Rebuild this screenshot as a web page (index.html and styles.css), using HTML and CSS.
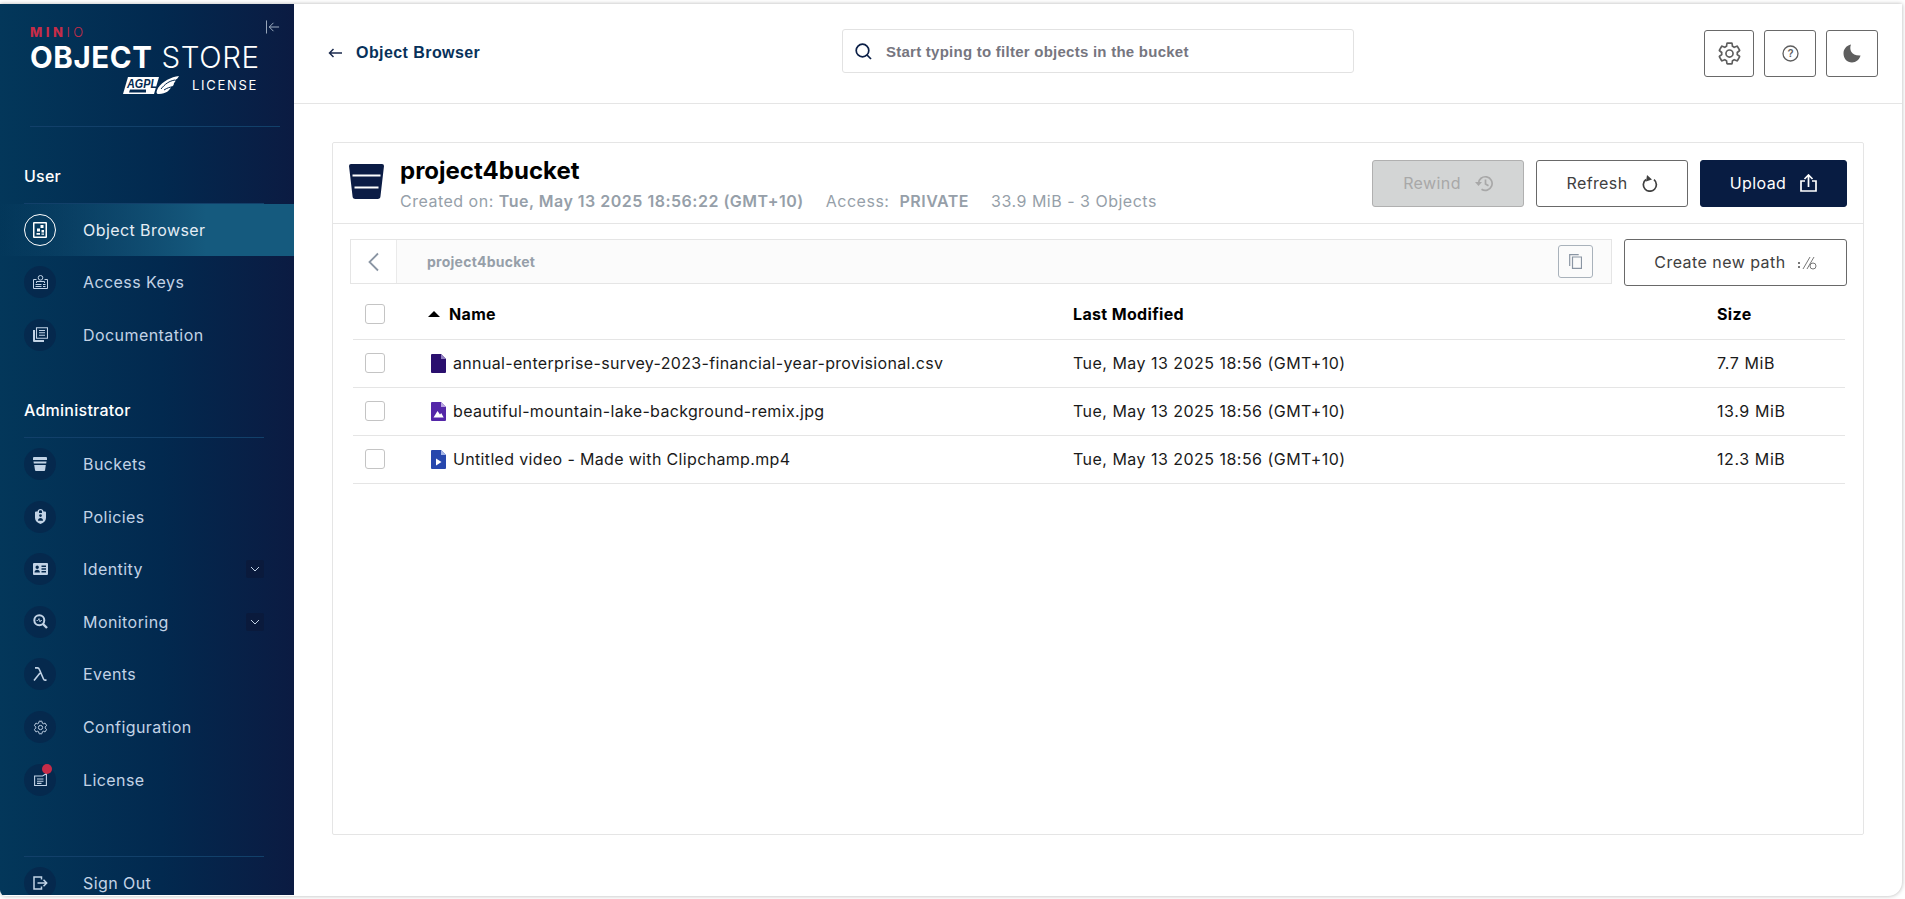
FILE: index.html
```html
<!DOCTYPE html>
<html lang="en">
<head>
    <meta charset="UTF-8">
    <meta name="viewport" content="width=device-width, initial-scale=1.0">
    <title>MinIO Object Store - Object Browser</title>
    <link rel="stylesheet" href="styles.css">
</head>
<body>
    <svg class="defs" width="0" height="0">
        <symbol id="gear" viewBox="0 0 24 24">
            <path fill="none" stroke="currentColor" stroke-width="1.6" stroke-linejoin="round" d="M19.43 12.98c.04-.32.07-.64.07-.98 0-.34-.03-.66-.07-.98l2.11-1.65c.19-.15.24-.42.12-.64l-2-3.46c-.12-.22-.37-.3-.61-.22l-2.49 1c-.52-.4-1.08-.73-1.69-.98l-.38-2.65C14.46 2.18 14.25 2 14 2h-4c-.25 0-.46.18-.49.42l-.38 2.65c-.61.25-1.17.59-1.69.98l-2.49-1c-.24-.08-.49 0-.61.22l-2 3.46c-.13.22-.07.49.12.64l2.11 1.65c-.04.32-.07.65-.07.98 0 .33.03.66.07.98l-2.11 1.65c-.19.15-.24.42-.12.64l2 3.46c.12.22.37.3.61.22l2.49-1c.52.4 1.08.73 1.69.98l.38 2.65c.03.24.24.42.49.42h4c.25 0 .46-.18.49-.42l.38-2.65c.61-.25 1.17-.59 1.69-.98l2.49 1c.24.08.49 0 .61-.22l2-3.46c.12-.22.07-.49-.12-.64z"/>
            <circle cx="12" cy="12" r="3.4" fill="none" stroke="currentColor" stroke-width="1.6"/>
        </symbol>
        <symbol id="chevron" viewBox="0 0 10 6">
            <path fill="none" stroke="currentColor" stroke-width="1" d="M1 1l4 4 4-4"/>
        </symbol>
    </svg>

    <div class="app">
        <aside class="sidebar">
            <div class="brand">
                <div class="logo">
                    <div class="logo-minio"><b>MIN</b>IO</div>
                    <div class="logo-title"><b>OBJECT</b> STORE</div>
                    <div class="logo-license">
                        <svg class="agpl" width="58" height="19" viewBox="0 0 58 19">
                            <path fill="#fff" d="M6 1h31l-5 17H1z"/>
                            <text x="5" y="12" class="agpl-text" textLength="30" lengthAdjust="spacingAndGlyphs">AGPL</text>
                            <path fill="#04294f" d="M8 13.500h16v3H7z"/>
                            <path fill="#fff" d="M36 12C41 5 49 1 57 0c-1 2-2 3-4 4 1 1 0 2-1 3 0 2-1 3-3 4-1 3-5 7-12 7-3 0-3-2-1-6z"/>
                            <path fill="none" stroke="#04294f" stroke-width="1" d="M39 13c4-5 8-8 14-9M42 14c3-2 6-3 8-3"/>
                        </svg>
                        <span>LICENSE</span>
                    </div>
                </div>
                <svg class="collapse" width="15" height="14" viewBox="0 0 15 14">
                    <path fill="none" stroke="#a9b8c9" stroke-width="1" d="M.5 0v14M14 7H3.500M8 2.500L3.500 7 8 11.500"/>
                </svg>
            </div>

            <div class="group-title first">User</div>
            <a class="nav-item active">
                <span class="nav-icon">
                    <svg width="14" height="16" viewBox="0 0 14 16"><path fill="#fff" fill-rule="evenodd" d="M1 0h12a1 1 0 011 1v14a1 1 0 01-1 1H1a1 1 0 01-1-1V1a1 1 0 011-1zm.5 1.500v13h11v-13z"/><path fill="#fff" d="M7.500 3h3v3h-3zM4 6.500h3v3H4zM8.500 8h2.500v2.500H8.500zM3.500 11h3.500v1.800H3.500zM8.500 11.500h2.500v1.300H8.500z"/></svg>
                </span>
                <span class="nav-label">Object Browser</span>
            </a>
            <a class="nav-item">
                <span class="nav-icon">
                    <svg width="15" height="14" viewBox="0 0 15 14"><path fill="none" stroke="currentColor" stroke-width="1" d="M3.500 4.500H.5v9h14v-9h-3"/><circle cx="7.500" cy="2.800" r="2.300" fill="none" stroke="currentColor"/><path fill="none" stroke="currentColor" stroke-width="1" d="M3.500 8V6.500h8V8M2.500 9.500h6M2.500 11.500h6M10 9.500h2.500M10 11.500h2.500"/></svg>
                </span>
                <span class="nav-label">Access Keys</span>
            </a>
            <a class="nav-item">
                <span class="nav-icon">
                    <svg width="15" height="15" viewBox="0 0 15 15"><path fill="none" stroke="currentColor" stroke-width="1.100" d="M3.500 .8h11v10.400h-11zM6 3.500h6M6 5.800h6M6 8.200h6"/><path fill="currentColor" d="M0 3h2v10h9v2H1a1 1 0 01-1-1z"/></svg>
                </span>
                <span class="nav-label">Documentation</span>
            </a>

            <div class="group-title">Administrator</div>
            <a class="nav-item">
                <span class="nav-icon">
                    <svg width="14" height="14" viewBox="0 0 14 14"><path fill="currentColor" d="M1 0h12a1 1 0 011 1v2H0V1a1 1 0 011-1zM.5 4.500h13l-.3 2H.8zM1.200 8h11.600l-.7 5a1 1 0 01-1 1H3a1 1 0 01-1-1z"/></svg>
                </span>
                <span class="nav-label">Buckets</span>
            </a>
            <a class="nav-item">
                <span class="nav-icon">
                    <svg width="11" height="15" viewBox="0 0 11 15"><path fill="currentColor" fill-rule="evenodd" d="M5.500 0C7.200 0 8.300 1 8.500 2.500H10a1 1 0 011 1V9c0 3-2.500 5-5.500 6C2.500 14 0 12 0 9V3.500a1 1 0 011-1h1.500C2.700 1 3.800 0 5.500 0zM4 2.500v1.500h3V2.500C7 1.800 6.300 1.300 5.500 1.300S4 1.800 4 2.500zM5.500 5.200a1.400 1.400 0 100 2.800 1.400 1.400 0 000-2.800zM3 11.800h5c0-2-1-2.900-2.500-2.900S3 9.800 3 11.800z"/></svg>
                </span>
                <span class="nav-label">Policies</span>
            </a>
            <a class="nav-item">
                <span class="nav-icon">
                    <svg width="15" height="12" viewBox="0 0 15 12"><path fill="currentColor" fill-rule="evenodd" d="M1 0h13a1 1 0 011 1v10a1 1 0 01-1 1H1a1 1 0 01-1-1V1a1 1 0 011-1zm7.500 2.500V4H13V2.500zm0 2.800v1.400H13V5.300zm0 2.700v1.500H13V8zM4.200 2.500a1.700 1.700 0 100 3.400 1.700 1.700 0 000-3.400zM1.500 9.500h5.400c0-1.800-1.200-2.800-2.700-2.800S1.500 7.700 1.500 9.500z"/></svg>
                </span>
                <span class="nav-label">Identity</span>
                <span class="nav-arrow"><svg width="10" height="6"><use href="#chevron"/></svg></span>
            </a>
            <a class="nav-item">
                <span class="nav-icon">
                    <svg width="15" height="15" viewBox="0 0 15 15"><circle cx="6.300" cy="6.300" r="5" fill="none" stroke="currentColor" stroke-width="2"/><path fill="none" stroke="currentColor" stroke-width="2.400" d="M10 10l4 4"/><path fill="none" stroke="currentColor" stroke-width=".8" d="M3.500 6.500h1.500l1-2 1 3.500.7-1.500H9"/></svg>
                </span>
                <span class="nav-label">Monitoring</span>
                <span class="nav-arrow"><svg width="10" height="6"><use href="#chevron"/></svg></span>
            </a>
            <a class="nav-item">
                <span class="nav-icon">
                    <svg width="14" height="14" viewBox="0 0 14 14"><path fill="none" stroke="currentColor" stroke-width="1.600" d="M2 .9h2.500c1 0 1.500.6 1.900 1.600L10.500 12c.3.7.7 1.100 1.500 1.100h1.500M7 6L1 13.500"/></svg>
                </span>
                <span class="nav-label">Events</span>
            </a>
            <a class="nav-item">
                <span class="nav-icon">
                    <svg width="15" height="15"><use href="#gear"/></svg>
                </span>
                <span class="nav-label">Configuration</span>
            </a>
            <a class="nav-item">
                <span class="nav-icon">
                    <svg width="13" height="13" viewBox="0 0 13 13"><path fill="none" stroke="currentColor" stroke-width="1.100" d="M.6 3h8l3.800-2.500v12H.6zM3 6h6.500M3 8.200h6.500M3 10.400h4.500"/></svg>
                    <span class="nav-dot"></span>
                </span>
                <span class="nav-label">License</span>
            </a>

            <div class="sign-out">
                <a class="nav-item">
                    <span class="nav-icon">
                        <svg width="15" height="14" viewBox="0 0 15 14"><path fill="none" stroke="currentColor" stroke-width="1.500" d="M8.500 3.500V1H1v12h7.500v-2.500M4.500 7H13M10.500 3.800L13.700 7l-3.200 3.200"/></svg>
                    </span>
                    <span class="nav-label">Sign Out</span>
                </a>
            </div>
        </aside>

        <main class="main">
            <header class="topbar">
                <div class="page-title">
                    <svg width="14" height="10" viewBox="0 0 14 10"><path fill="none" stroke="#1b2a4e" stroke-width="1.500" d="M14 5H1.500M5.500 1L1.500 5l4 4"/></svg>
                    <span>Object Browser</span>
                </div>
                <div class="search">
                    <svg width="17" height="17" viewBox="0 0 17 17"><circle cx="7.500" cy="7.500" r="6.300" fill="none" stroke="#0b1f47" stroke-width="1.700"/><path fill="none" stroke="#0b1f47" stroke-width="1.700" d="M12 12l4 4"/></svg>
                    <span>Start typing to filter objects in the bucket</span>
                </div>
                <div class="top-actions">
                    <button class="icon-btn gear-btn"><svg width="25" height="25"><use href="#gear"/></svg></button>
                    <button class="icon-btn">
                        <svg width="17" height="17" viewBox="0 0 17 17"><circle cx="8.500" cy="8.500" r="7.500" fill="none" stroke="#5e5e5e" stroke-width="1.300"/><text x="8.500" y="12" class="help-mark">?</text></svg>
                    </button>
                    <button class="icon-btn">
                        <svg width="18" height="19" viewBox="0 0 18 19"><path fill="#5e5e5e" d="M8 .5C6 5 8 12 17.500 11.500 16.500 15.500 13 18.500 9 18.500 4 18.500 .5 14.500 .5 9.500 .5 5 3.500 1.500 8 .5z"/></svg>
                    </button>
                </div>
            </header>

            <div class="content">
                <section class="panel">
                    <div class="panel-head">
                        <svg class="bucket" width="35" height="35" viewBox="0 0 35 35">
                            <path fill="#0b1c45" d="M2 0h31a2 2 0 012 2l-3.500 30a3 3 0 01-3 3H6.500a3 3 0 01-3-3L0 2a2 2 0 012-2z"/>
                            <path fill="#fff" d="M3.500 10.500h28v2h-28zM5.500 22.500h24v2h-24z"/>
                        </svg>
                        <div class="bucket-info">
                            <h1>project4bucket</h1>
                            <div class="bucket-meta">
                                <span>Created on: <b>Tue, May 13 2025 18:56:22 (GMT+10)</b></span>
                                <span>Access: &nbsp;<b>PRIVATE</b></span>
                                <span>33.9 MiB - 3 Objects</span>
                            </div>
                        </div>
                        <div class="head-actions">
                            <button class="btn disabled">Rewind
                                <svg width="18" height="17" viewBox="0 0 18 17"><path fill="none" stroke="#a8a8a8" stroke-width="1.700" d="M3.500 8.500a6.800 6.800 0 113 5.700M10.500 4.500V9l3 1.800"/><path fill="#a8a8a8" d="M0 7h7L3.500 11z"/></svg>
                            </button>
                            <button class="btn">Refresh
                                <svg width="16" height="18" viewBox="0 0 16 18"><path fill="none" stroke="#404040" stroke-width="1.700" d="M4 5.500a6.500 6.500 0 108 .2"/><path fill="#404040" d="M5 1l5 4.500L4 7.500z"/></svg>
                            </button>
                            <button class="btn primary">Upload
                                <svg width="17" height="18" viewBox="0 0 17 18"><path fill="none" stroke="#fff" stroke-width="1.700" d="M5 7H1v10h15V7h-4M8.500 13V2M4.500 5l4-4 4 4"/></svg>
                            </button>
                        </div>
                    </div>

                    <div class="panel-body">
                        <div class="path-row">
                            <div class="breadcrumb">
                                <div class="back-cell">
                                    <svg width="13" height="20" viewBox="0 0 13 20"><path fill="none" stroke="#8a95a3" stroke-width="1.800" d="M11 1.500L2.500 10l8.500 8.500"/></svg>
                                </div>
                                <div class="crumb-path">project4bucket</div>
                                <button class="copy-btn">
                                    <svg width="13" height="15" viewBox="0 0 13 15"><path fill="none" stroke="#8a95a3" stroke-width="1.200" d="M3.500 3h9v11.400h-9zM.7 12V.7h9"/></svg>
                                </button>
                            </div>
                            <button class="btn new-path"><span>Create new path</span>
                                <svg width="19" height="14" viewBox="0 0 19 14"><path fill="none" stroke="#777" stroke-width="1" d="M5 13L12 1M9 13L16 1"/><circle cx="15" cy="10" r="3" fill="none" stroke="#777"/><path fill="#777" d="M0 6h2v2H0zM0 10h2v2H0z"/></svg>
                            </button>
                        </div>

                        <div class="table">
                            <div class="row head">
                                <span class="check"></span>
                                <div class="sort-name"><i class="sort-arrow"></i>Name</div>
                                <div>Last Modified</div>
                                <div>Size</div>
                            </div>
                            <div class="row">
                                <span class="check"></span>
                                <div class="file">
                                    <svg width="15" height="19" viewBox="0 0 15 19"><path fill="#2a0f6e" d="M1 0h9l5 5v13a1 1 0 01-1 1H1a1 1 0 01-1-1V1a1 1 0 011-1z"/><path fill="#8f7cc0" d="M10 0l5 5h-5z"/></svg>
                                    annual-enterprise-survey-2023-financial-year-provisional.csv
                                </div>
                                <div class="cell-date">Tue, May 13 2025 18:56 (GMT+10)</div>
                                <div class="cell-size">7.7 MiB</div>
                            </div>
                            <div class="row">
                                <span class="check"></span>
                                <div class="file">
                                    <svg width="15" height="19" viewBox="0 0 15 19"><path fill="#5427a8" d="M1 0h9l5 5v13a1 1 0 01-1 1H1a1 1 0 01-1-1V1a1 1 0 011-1z"/><path fill="#b7a3e0" d="M10 0l5 5h-5z"/><path fill="#fff" d="M2.500 15.500L6.500 9l2.500 3.500 1.200-1.500 2.500 4.500z"/></svg>
                                    beautiful-mountain-lake-background-remix.jpg
                                </div>
                                <div class="cell-date">Tue, May 13 2025 18:56 (GMT+10)</div>
                                <div class="cell-size">13.9 MiB</div>
                            </div>
                            <div class="row">
                                <span class="check"></span>
                                <div class="file">
                                    <svg width="15" height="19" viewBox="0 0 15 19"><path fill="#2747ad" d="M1 0h9l5 5v13a1 1 0 01-1 1H1a1 1 0 01-1-1V1a1 1 0 011-1z"/><path fill="#a3b4e6" d="M10 0l5 5h-5z"/><path fill="#fff" d="M5 8.500l5.500 3.500L5 15.500z"/></svg>
                                    Untitled video - Made with Clipchamp.mp4
                                </div>
                                <div class="cell-date">Tue, May 13 2025 18:56 (GMT+10)</div>
                                <div class="cell-size">12.3 MiB</div>
                            </div>
                        </div>
                    </div>
                </section>
            </div>
        </main>
    </div>
</body>
</html>
```

FILE: styles.css
```css
* {
    box-sizing: border-box;
}
html,
body {
    height: 100%;
}
body {
    margin: 0;
    background: #fff;
    font-family: Inter, "Liberation Sans", sans-serif;
    color: #000;
    overflow: hidden;
}
.defs {
    display: block;
    height: 0;
}
button {
    font-family: inherit;
    background: none;
    cursor: pointer;
}
.app {
    display: flex;
    height: 892px;
    margin: 4px 3px 0 0;
    border-radius: 0 0 14px 6px;
    box-shadow: 0 0 4px rgba(0, 0, 0, 0.3);
    overflow: hidden;
    background: #fff;
}

/* sidebar */
.sidebar {
    width: 294px;
    flex-shrink: 0;
    height: 891px;
    overflow: hidden;
    background: linear-gradient(90deg, #03375a 0%, #02294f 55%, #0b1b42 100%);
    color: #fff;
}
.brand {
    display: flex;
    align-items: flex-start;
    gap: 8px;
    height: 123px;
    margin: 0 14px 0 30px;
    padding-top: 24px;
    border-bottom: 1px solid #12406a;
}
.logo {
    width: 228px;
    flex-shrink: 0;
}
.logo-minio {
    font-size: 13px;
    font-weight: 300;
    line-height: 9px;
    letter-spacing: 3.500px;
    color: #c72c48;
}
.logo-minio b {
    font-weight: 800;
}
.logo-title {
    margin-top: 9px;
    font-size: 29.500px;
    font-weight: 300;
    letter-spacing: .6px;
    line-height: 22px;
    white-space: nowrap;
}
.logo-title b {
    font-weight: 700;
}
.logo-license {
    display: flex;
    justify-content: flex-end;
    align-items: center;
    gap: 12px;
    margin-top: 8px;
    font-size: 13px;
    letter-spacing: 1.700px;
    line-height: 19px;
}
.agpl-text {
    font-family: "Liberation Sans", sans-serif;
    font-size: 13px;
    font-weight: 700;
    font-style: italic;
    letter-spacing: 0;
    fill: #04294f;
}
.collapse {
    margin-top: -8px;
}
.group-title {
    margin: 0 30px 0 24px;
    height: 76.500px;
    display: flex;
    align-items: flex-end;
    padding-bottom: 17px;
    font-size: 16px;
    font-weight: 500;
    letter-spacing: .25px;
    line-height: 20px;
    border-bottom: 1px solid #12406a;
}
.nav-item {
    display: flex;
    align-items: center;
    height: 52.600px;
    padding: 0 30px 0 24px;
    color: #c2d3e6;
    font-size: 16px;
    letter-spacing: .43px;
}
.nav-item.active {
    color: #e4edf5;
    background: linear-gradient(90deg, rgba(21, 90, 126, 0) 0%, #155a7e 70%, #155a7e 100%);
}
.nav-icon {
    position: relative;
    display: flex;
    align-items: center;
    justify-content: center;
    width: 32px;
    height: 32px;
    margin-right: 27px;
    border-radius: 50%;
    background: rgba(8, 28, 66, 0.45);
    color: #c2d3e6;
}
.active .nav-icon {
    background: none;
    border: 1px solid #fff;
}
.nav-dot {
    position: absolute;
    top: 0;
    right: 4px;
    width: 10px;
    height: 10px;
    border-radius: 50%;
    background: #c72c48;
}
.nav-label {
    flex: 1;
}
.nav-arrow {
    display: flex;
    align-items: center;
    justify-content: center;
    width: 18px;
    height: 18px;
    border-radius: 2px;
    background: #0a1a3c;
    color: #c2d3e6;
}
.sign-out {
    margin: 50px 30px 0 24px;
    border-top: 1px solid #12406a;
}
.sign-out .nav-item {
    padding: 0;
}

/* top bar */
.main {
    flex: 1;
    display: flex;
    flex-direction: column;
    min-width: 0;
}
.topbar {
    display: grid;
    grid-template-columns: 548px 512px 1fr;
    align-items: center;
    flex-shrink: 0;
    height: 100px;
    border-bottom: 1px solid #e5e5e5;
}
.page-title {
    display: flex;
    align-items: center;
    gap: 14px;
    padding-left: 34px;
    margin-bottom: 2px;
    font-family: "Liberation Sans", sans-serif;
    font-size: 16px;
    font-weight: 700;
    letter-spacing: .43px;
    color: #07315a;
}
.search {
    display: flex;
    align-items: center;
    gap: 14px;
    height: 44px;
    padding-left: 12px;
    margin-bottom: 5px;
    border: 1px solid #e2e2e2;
    border-radius: 3px;
    font-family: "Liberation Sans", sans-serif;
    font-size: 15px;
    font-weight: 700;
    letter-spacing: .25px;
    color: #76767f;
}
.top-actions {
    display: flex;
    justify-content: flex-end;
    gap: 10px;
    padding-right: 24px;
}
.icon-btn {
    display: flex;
    align-items: center;
    justify-content: center;
    width: 52px;
    height: 47px;
    padding: 0;
    border: 1px solid #696969;
    border-radius: 3px;
    color: #5e5e5e;
}
.gear-btn {
    width: 50px;
}
.help-mark {
    font-family: "Liberation Sans", sans-serif;
    font-size: 10px;
    font-weight: 700;
    text-anchor: middle;
    fill: #5e5e5e;
}

/* bucket panel */
.content {
    flex: 1;
    padding: 38px 38px 0;
}
.panel {
    height: 693px;
    border: 1px solid #e5e5e5;
    border-radius: 2px;
}
.panel-head {
    display: flex;
    align-items: center;
    height: 81px;
    padding: 0 16px 0 16px;
    border-bottom: 1px solid #e5e5e5;
}
.bucket {
    flex-shrink: 0;
    margin-right: 16px;
    margin-top: -3px;
}
.bucket-info {
    flex: 1;
    padding-top: 3px;
}
.bucket-info h1 {
    margin: 0;
    font-size: 24px;
    font-weight: 700;
    line-height: 28px;
    color: #000;
}
.bucket-meta {
    display: flex;
    gap: 22px;
    margin-top: 4px;
    font-size: 16px;
    letter-spacing: .5px;
    line-height: 24px;
    color: #969fa9;
}
.bucket-meta b {
    font-weight: 600;
}
.head-actions {
    display: flex;
    gap: 12px;
}
.btn {
    display: flex;
    align-items: center;
    justify-content: center;
    gap: 14px;
    width: 152px;
    height: 47px;
    padding: 0;
    border: 1px solid #696969;
    border-radius: 3px;
    font-size: 16px;
    letter-spacing: .4px;
    color: #404040;
}
.btn.disabled {
    background: #d3d5d5;
    border-color: #b0b0b0;
    color: #a8a8a8;
}
.btn.primary {
    width: 147px;
    background: #081c42;
    border-color: #081c42;
    color: #fff;
}

/* path bar and table */
.panel-body {
    padding: 15px 16px 0 17px;
}
.path-row {
    display: flex;
    gap: 12px;
    align-items: flex-start;
}
.breadcrumb {
    flex: 1;
    display: flex;
    align-items: center;
    height: 45px;
    border: 1px solid #e5e5e5;
    background: #fbfbfb;
    padding-right: 18px;
}
.back-cell {
    display: flex;
    align-items: center;
    justify-content: center;
    width: 46px;
    height: 100%;
    background: #fff;
    border-right: 1px solid #eaeaea;
}
.crumb-path {
    flex: 1;
    padding-left: 30px;
    font-size: 14px;
    font-weight: 700;
    letter-spacing: .25px;
    color: #969fa9;
}
.copy-btn {
    display: flex;
    align-items: center;
    justify-content: center;
    width: 35px;
    height: 33px;
    padding: 0;
    border: 1px solid #a9b2bb;
    border-radius: 3px;
}
.new-path {
    width: 223px;
    flex-shrink: 0;
    gap: 12px;
    letter-spacing: .45px;
}
.new-path span {
    margin-top: -2px;
}
.table {
    margin: 6px 2px 0 3px;
}
.row {
    display: grid;
    grid-template-columns: 78px 642px 644px 1fr;
    align-items: center;
    height: 48px;
    padding-bottom: 1px;
    border-bottom: 1px solid #e5e5e5;
    font-size: 16px;
    letter-spacing: .34px;
    color: #1a1a1a;
}
.row.head {
    padding-bottom: 3px;
    font-weight: 700;
    color: #000;
}
.cell-date {
    letter-spacing: .47px;
}
.cell-size {
    letter-spacing: .6px;
}
.check {
    display: block;
    width: 20px;
    height: 20px;
    margin-left: 12px;
    border: 1px solid #c4c4c4;
    border-radius: 3px;
    background: #fff;
}
.sort-name {
    display: flex;
    align-items: center;
    gap: 9px;
    margin-left: -3px;
}
.sort-arrow {
    width: 0;
    height: 0;
    border-left: 6.500px solid transparent;
    border-right: 6.500px solid transparent;
    border-bottom: 6px solid #000;
}
.file {
    display: flex;
    align-items: center;
    gap: 7px;
}
```
